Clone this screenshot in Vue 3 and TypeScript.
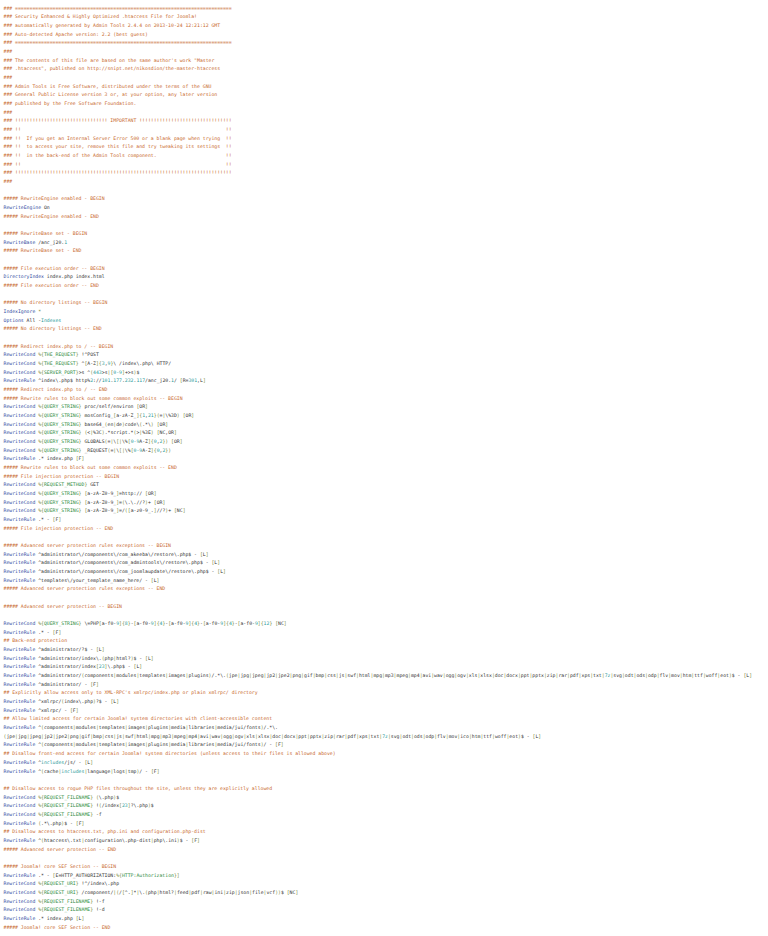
<script setup lang="ts">
type Token = { text: string; kind: string }

const source = String.raw`### ===========================================================================
### Security Enhanced & Highly Optimized .htaccess File for Joomla!
### automatically generated by Admin Tools 2.4.4 on 2013-10-24 12:21:12 GMT
### Auto-detected Apache version: 2.2 (best guess)
### ===========================================================================
###
### The contents of this file are based on the same author's work "Master
### .htaccess", published on http://snipt.net/nikosdion/the-master-htaccess
###
### Admin Tools is Free Software, distributed under the terms of the GNU
### General Public License version 3 or, at your option, any later version
### published by the Free Software Foundation.
###
### !!!!!!!!!!!!!!!!!!!!!!!!!!!!!!!! IMPORTANT !!!!!!!!!!!!!!!!!!!!!!!!!!!!!!!!
### !!                                                                       !!
### !!  If you get an Internal Server Error 500 or a blank page when trying  !!
### !!  to access your site, remove this file and try tweaking its settings  !!
### !!  in the back-end of the Admin Tools component.                        !!
### !!                                                                       !!
### !!!!!!!!!!!!!!!!!!!!!!!!!!!!!!!!!!!!!!!!!!!!!!!!!!!!!!!!!!!!!!!!!!!!!!!!!!!
###

##### RewriteEngine enabled - BEGIN
RewriteEngine On
##### RewriteEngine enabled - END

##### RewriteBase set - BEGIN
RewriteBase /anc_j20.1
##### RewriteBase set - END

##### File execution order -- BEGIN
DirectoryIndex index.php index.html
##### File execution order -- END

##### No directory listings -- BEGIN
IndexIgnore *
Options All -Indexes
##### No directory listings -- END

##### Redirect index.php to / -- BEGIN
RewriteCond %{THE_REQUEST} !^POST
RewriteCond %{THE_REQUEST} ^[A-Z]{3,9}\ /index\.php\ HTTP/
RewriteCond %{SERVER_PORT}>s ^(443>s|[0-9]+>s)$
RewriteRule ^index\.php$ http%2://101.177.232.117/anc_j20.1/ [R=301,L]
##### Redirect index.php to / -- END
##### Rewrite rules to block out some common exploits -- BEGIN
RewriteCond %{QUERY_STRING} proc/self/environ [OR]
RewriteCond %{QUERY_STRING} mosConfig_[a-zA-Z_]{1,21}(=|\%3D) [OR]
RewriteCond %{QUERY_STRING} base64_(en|de)code\(.*\) [OR]
RewriteCond %{QUERY_STRING} (<|%3C).*script.*(>|%3E) [NC,OR]
RewriteCond %{QUERY_STRING} GLOBALS(=|\[|\%[0-9A-Z]{0,2}) [OR]
RewriteCond %{QUERY_STRING} _REQUEST(=|\[|\%[0-9A-Z]{0,2})
RewriteRule .* index.php [F]
##### Rewrite rules to block out some common exploits -- END
##### File injection protection -- BEGIN
RewriteCond %{REQUEST_METHOD} GET
RewriteCond %{QUERY_STRING} [a-zA-Z0-9_]=http:// [OR]
RewriteCond %{QUERY_STRING} [a-zA-Z0-9_]=(\.\.//?)+ [OR]
RewriteCond %{QUERY_STRING} [a-zA-Z0-9_]=/([a-z0-9_.]//?)+ [NC]
RewriteRule .* - [F]
##### File injection protection -- END

##### Advanced server protection rules exceptions -- BEGIN
RewriteRule ^administrator\/components\/com_akeeba\/restore\.php$ - [L]
RewriteRule ^administrator\/components\/com_admintools\/restore\.php$ - [L]
RewriteRule ^administrator\/components\/com_joomlaupdate\/restore\.php$ - [L]
RewriteRule ^templates\/your_template_name_here/ - [L]
##### Advanced server protection rules exceptions -- END

##### Advanced server protection -- BEGIN

RewriteCond %{QUERY_STRING} \=PHP[a-f0-9]{8}-[a-f0-9]{4}-[a-f0-9]{4}-[a-f0-9]{4}-[a-f0-9]{12} [NC]
RewriteRule .* - [F]
## Back-end protection
RewriteRule ^administrator/?$ - [L]
RewriteRule ^administrator/index\.(php|html?)$ - [L]
RewriteRule ^administrator/index[23]\.php$ - [L]
RewriteRule ^administrator/(components|modules|templates|images|plugins)/.*\.(jpe|jpg|jpeg|jp2|jpe2|png|gif|bmp|css|js|swf|html|mpg|mp3|mpeg|mp4|avi|wav|ogg|ogv|xls|xlsx|doc|docx|ppt|pptx|zip|rar|pdf|xps|txt|7z|svg|odt|ods|odp|flv|mov|htm|ttf|woff|eot)$ - [L]
RewriteRule ^administrator/ - [F]
## Explicitly allow access only to XML-RPC's xmlrpc/index.php or plain xmlrpc/ directory
RewriteRule ^xmlrpc/(index\.php)?$ - [L]
RewriteRule ^xmlrpc/ - [F]
## Allow limited access for certain Joomla! system directories with client-accessible content
RewriteRule ^(components|modules|templates|images|plugins|media|libraries|media/jui/fonts)/.*\.
(jpe|jpg|jpeg|jp2|jpe2|png|gif|bmp|css|js|swf|html|mpg|mp3|mpeg|mp4|avi|wav|ogg|ogv|xls|xlsx|doc|docx|ppt|pptx|zip|rar|pdf|xps|txt|7z|svg|odt|ods|odp|flv|mov|ico|htm|ttf|woff|eot)$ - [L]
RewriteRule ^(components|modules|templates|images|plugins|media|libraries|media/jui/fonts)/ - [F]
## Disallow front-end access for certain Joomla! system directories (unless access to their files is allowed above)
RewriteRule ^includes/js/ - [L]
RewriteRule ^(cache|includes|language|logs|tmp)/ - [F]

## Disallow access to rogue PHP files throughout the site, unless they are explicitly allowed
RewriteCond %{REQUEST_FILENAME} (\.php)$
RewriteCond %{REQUEST_FILENAME} !(/index[23]?\.php)$
RewriteCond %{REQUEST_FILENAME} -f
RewriteRule (.*\.php)$ - [F]
## Disallow access to htaccess.txt, php.ini and configuration.php-dist
RewriteRule ^(htaccess\.txt|configuration\.php-dist|php\.ini)$ - [F]
##### Advanced server protection -- END

##### Joomla! core SEF Section -- BEGIN
RewriteRule .* - [E=HTTP_AUTHORIZATION:%{HTTP:Authorization}]
RewriteCond %{REQUEST_URI} !^/index\.php
RewriteCond %{REQUEST_URI} /component/|(/[^.]*|\.(php|html?|feed|pdf|raw|ini|zip|json|file|vcf))$ [NC]
RewriteCond %{REQUEST_FILENAME} !-f
RewriteCond %{REQUEST_FILENAME} !-d
RewriteRule .* index.php [L]
##### Joomla! core SEF Section -- END`

const tokenPattern =
  /(%\{|\})|([A-Z_:a-z]+(?=\}))|(\b0-9|\b\d+\b|\b7z\b|Indexes|includes(?=[/|]))|([\[\]{|()]|\*$)/g

function tokenize(line: string): Token[] {
  if (line.startsWith('#')) return [{ text: line, kind: 'comment' }]
  const tokens: Token[] = []
  let rest = line
  const head = /^(Rewrite\w+|DirectoryIndex|IndexIgnore|Options)\b/.exec(line)
  if (head) {
    tokens.push({ text: head[0], kind: 'directive' })
    rest = line.slice(head[0].length)
  }
  let last = 0
  for (const match of rest.matchAll(tokenPattern)) {
    const at = match.index ?? 0
    if (at > last) tokens.push({ text: rest.slice(last, at), kind: 'plain' })
    const kind = match[1] ? 'punct' : match[2] ? 'variable' : match[3] ? 'number' : 'punct'
    tokens.push({ text: match[0], kind })
    last = at + match[0].length
  }
  if (last < rest.length) tokens.push({ text: rest.slice(last), kind: 'plain' })
  return tokens
}

const lines = source.split('\n').map(tokenize)
</script>

<template>
  <pre class="listing"><code class="line" v-for="(line, i) in lines" :key="i"><span v-for="(token, j) in line" :key="j" :class="token.kind">{{ token.text }}</span></code></pre>
</template>

<style>
html,
body {
  background: #fff;
}
</style>

<style scoped>
.listing {
  margin: 0;
  padding: 5.5px 0 0 3.5px;
  font-family: "DejaVu Sans Mono", monospace;
  font-size: 4.8px;
  line-height: 8.67px;
  text-rendering: geometricPrecision;
  color: #333;
  white-space: pre;
}
.line {
  display: block;
  min-height: 8.67px;
  font: inherit;
}
.comment {
  color: #c8682c;
}
.directive {
  color: #2f4aa0;
}
.variable {
  color: #2c8a3c;
}
.number {
  color: #1f9a9a;
}
.punct {
  color: #7a8a3a;
}
</style>
